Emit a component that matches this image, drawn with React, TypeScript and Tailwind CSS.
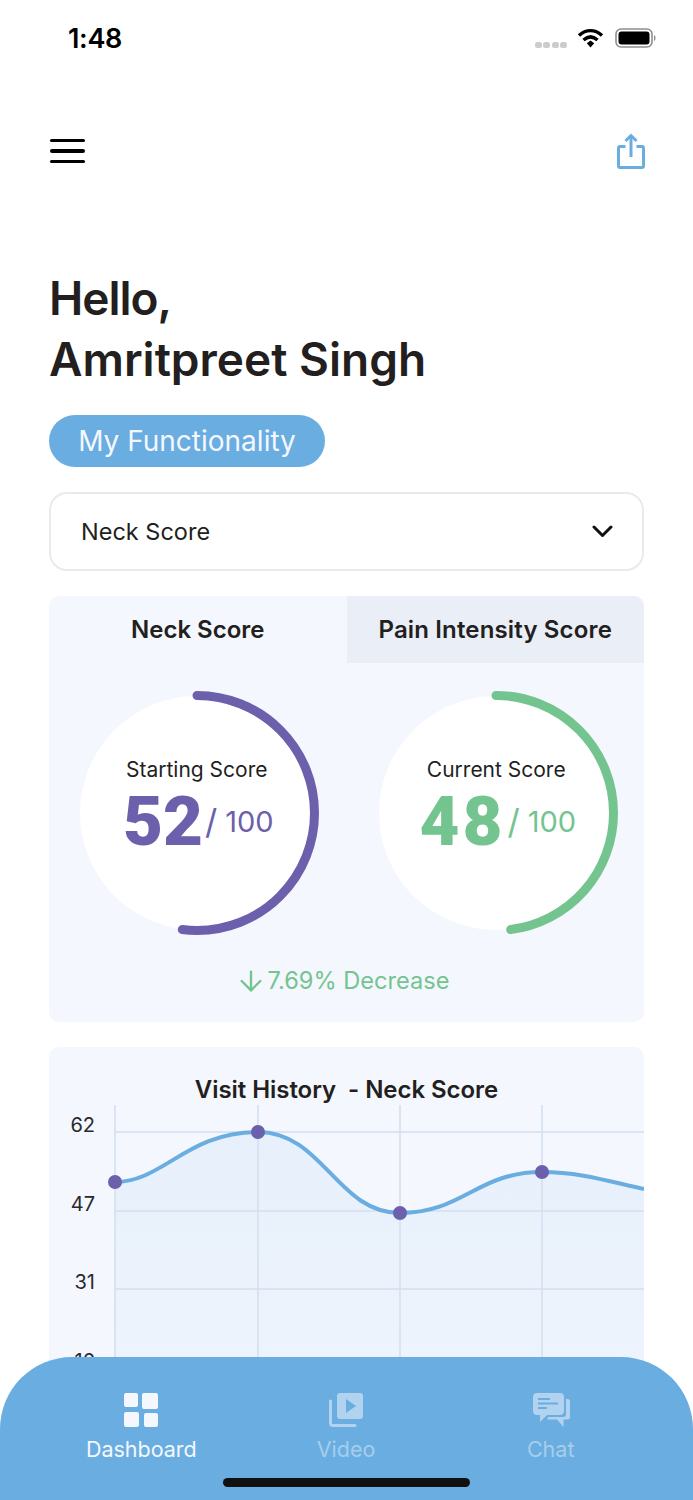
import React from 'react';
import { ArrowDown } from 'lucide-react';

const BLUE = '#6aade0';

const ScoreRing: React.FC<{
  label: string;
  score: number;
  percent: number;
  color: string;
  textClass: string;
  scoreClass?: string;
}> = ({ label, score, percent, color, textClass, scoreClass }) => (
  <div className="relative flex h-[244px] w-[244px] flex-col items-center">
    <svg className="absolute inset-0" width="244" height="244" viewBox="0 0 244 244">
      <circle cx="122" cy="122" r="117" fill="#ffffff" />
      <circle
        cx="122"
        cy="122"
        r="117.5"
        fill="none"
        stroke={color}
        strokeWidth="9"
        strokeLinecap="round"
        pathLength={100}
        strokeDasharray={`${percent} 100`}
        transform="rotate(-90 122 122)"
      />
    </svg>
    <div className="relative mt-[65px] text-[21px] leading-[28px] text-[#1f1f24]">{label}</div>
    <div className={`relative mt-[8px] flex items-center pl-[3px] ${textClass}`}>
      <span className={`[font-family:Roboto,sans-serif] text-[69px] leading-[60px] font-black ${scoreClass ?? ''}`}>
        {score}
      </span>
      <span className="ml-[2px] text-[34px] leading-[40px] font-normal">/</span>
      <span className="ml-[8px] text-[29px] leading-[40px] font-normal">100</span>
    </div>
  </div>
);

const NavItem: React.FC<{ label: string; active?: boolean; children: React.ReactNode }> = ({
  label,
  active,
  children,
}) => (
  <div className="flex flex-col items-center">
    {children}
    <span className={`mt-[8px] text-[21.5px] leading-[28px] ${active ? 'text-[#f4f7fe]' : 'text-[#a6cdec]'}`}>
      {label}
    </span>
  </div>
);

const App: React.FC = () => {
  const yLabels = ['62', '47', '31', '16'];
  const gridX = [10, 153, 295, 437];
  const gridY = [27, 106, 184];
  const dots = [
    [10, 77],
    [153, 27],
    [295, 108],
    [437, 67],
  ];
  const curve = 'M10 77 C58 77 82 27 153 27 C218 27 232 108 295 108 C358 108 372 67 437 67 C476 67 506 77 539 84';

  return (
    <div className="relative h-[1500px] w-[693px] overflow-hidden bg-white [font-family:Inter,sans-serif] text-[#1f1f24]">
      {/* status bar */}
      <div className="flex h-[76px] items-center justify-between pr-[36px] pl-[68px]">
        <span className="pt-[2px] text-[27px] leading-[32px] font-semibold tracking-[-0.3px] text-black">1:48</span>
        <div className="flex items-center">
          <div className="mt-[13px] flex gap-[1.5px]">
            <div className="h-[6px] w-[7px] rounded-[2.5px] bg-[#cccccc]" />
            <div className="h-[6px] w-[7px] rounded-[2.5px] bg-[#cccccc]" />
            <div className="h-[6px] w-[7px] rounded-[2.5px] bg-[#cccccc]" />
            <div className="h-[6px] w-[7px] rounded-[2.5px] bg-[#cccccc]" />
          </div>
          <svg className="ml-[10px]" width="27" height="22" viewBox="0 0 27 22" fill="none">
            <path d="M2 8.5 C9 2 18 2 25 8.5" stroke="#000" strokeWidth="3.4" />
            <path d="M6.5 13 C11 9 16 9 20.5 13" stroke="#000" strokeWidth="3.4" />
            <path d="M9.8 16.2 L13.5 13.6 L17.2 16.2 L13.5 20.5 Z" fill="#000" />
          </svg>
          <svg className="ml-[11px]" width="42" height="20" viewBox="0 0 42 20" fill="none">
            <rect x="1" y="1" width="36" height="18" rx="5" stroke="#8e8e8e" strokeWidth="1.6" />
            <rect x="3.5" y="3.5" width="31" height="13" rx="3" fill="#000" />
            <path d="M39 7 C41 7.5 41 12.5 39 13 Z" fill="#8e8e8e" />
          </svg>
        </div>
      </div>

      {/* header */}
      <div className="mt-[57px] flex h-[36px] items-center justify-between pr-[48px] pl-[50px]">
        <div className="flex w-[35px] flex-col gap-[7px]">
          <div className="h-[3.5px] rounded-full bg-black" />
          <div className="h-[3.5px] rounded-full bg-black" />
          <div className="h-[3.5px] rounded-full bg-black" />
        </div>
        <svg width="28" height="36" viewBox="0 0 28 36" fill="none" stroke={BLUE} strokeWidth="3">
          <path d="M8.5 13.5 H3 Q1.5 13.5 1.5 15 V33 Q1.5 34.5 3 34.5 H25 Q26.5 34.5 26.5 33 V15 Q26.5 13.5 25 13.5 H19.5" />
          <path d="M14 24 V3" />
          <path d="M8.5 8 L14 2.5 L19.5 8" />
        </svg>
      </div>

      <div className="px-[49px]">
        <h1 className="mt-[99px] text-[46px] leading-[61px] font-semibold text-[#231f20]">
          <span className="tracking-[-1px]">Hello,</span>
          <br />
          Amritpreet Singh
        </h1>

        <div className="mt-[25px] flex h-[52px] w-[276px] items-center justify-center rounded-full bg-[#6aade0] text-[28px] text-[#f4f7fe]">
          My Functionality
        </div>

        <div className="mt-[25px] flex h-[79px] items-center justify-between rounded-[18px] border-2 border-[#e8eaf0] pr-[29px] pl-[30px]">
          <span className="text-[23.5px] text-[#231f20]">Neck Score</span>
          <svg width="21" height="13" viewBox="0 0 21 13" fill="none" stroke="#111" strokeWidth="3" strokeLinecap="round" strokeLinejoin="round">
            <path d="M2 2 L10.5 10.5 L19 2" />
          </svg>
        </div>

        {/* score card */}
        <div className="mt-[25px] h-[426px] overflow-hidden rounded-[10px] bg-[#f4f7fe]">
          <div className="grid h-[67px] grid-cols-2 text-[24px] font-semibold text-[#231f20]">
            <div className="flex items-center justify-center">Neck Score</div>
            <div className="flex items-center justify-center bg-[#e9eef7] tracking-[0.15px]">Pain Intensity Score</div>
          </div>
          <div className="mt-[28px] grid grid-cols-2">
            <div className="flex justify-center pr-[2px]">
              <ScoreRing label="Starting Score" score={52} percent={52} color="#6c5fab" textClass="text-[#6c5fab]" />
            </div>
            <div className="flex justify-center pl-[2px]">
              <ScoreRing
                label="Current Score"
                score={48}
                percent={48}
                color="#74c490"
                textClass="text-[#74c490]"
                scoreClass="tracking-[3px]"
              />
            </div>
          </div>
          <div className="mt-[29px] flex items-center justify-center pr-[9px] text-[23.6px] leading-[34px] text-[#74c490]">
            <ArrowDown size={32} strokeWidth={1.75} className="-my-1 mr-[1px]" />
            7.69% Decrease
          </div>
        </div>

        {/* visit history */}
        <div className="mt-[25px] h-[340px] overflow-hidden rounded-t-[10px] bg-[#f4f7fe]">
          <div className="pt-[26px] text-center text-[24px] leading-[34px] font-semibold tracking-[-0.05px] text-[#231f20]">
            Visit History&nbsp; - Neck Score
          </div>
          <div className="mt-[-2px] flex">
            <div className="flex w-[56px] flex-col items-end gap-[50.5px] pt-[6px] pr-[10px] text-[20px] leading-[28px] text-[#2a2a2e]">
              {yLabels.map(label => (
                <span key={label}>{label}</span>
              ))}
            </div>
            <svg width="539" height="270" viewBox="0 0 539 270" fill="none">
              <defs>
                <linearGradient id="area" x1="0" y1="0" x2="0" y2="1">
                  <stop offset="0" stopColor="#6aade0" stopOpacity="0.1" />
                  <stop offset="1" stopColor="#6aade0" stopOpacity="0.04" />
                </linearGradient>
              </defs>
              <path d={`${curve} V270 H10 Z`} fill="url(#area)" />
              {gridX.map(x => (
                <line key={x} x1={x} y1="0" x2={x} y2="270" stroke="#d3deee" strokeWidth="1.5" />
              ))}
              {gridY.map(y => (
                <line key={y} x1="10" y1={y} x2="539" y2={y} stroke="#d3deee" strokeWidth="1.5" />
              ))}
              <path d={curve} stroke="#6aade0" strokeWidth="4" />
              {dots.map(([x, y]) => (
                <circle key={x} cx={x} cy={y} r="7" fill="#6c5fab" />
              ))}
            </svg>
          </div>
        </div>
      </div>

      {/* bottom nav */}
      <div className="absolute right-0 bottom-0 left-0 h-[143px] rounded-t-[72px] bg-[#6aade0]">
        <div className="grid grid-cols-3 pt-[36px] pr-[40px] pl-[39px]">
          <NavItem label="Dashboard" active>
            <svg width="36" height="34" viewBox="0 0 36 34" fill="#f4f7fe">
              <rect x="1" y="0" width="14" height="14" rx="2" />
              <rect x="19" y="0" width="16" height="16" rx="2" />
              <rect x="1" y="19" width="15" height="15" rx="2" />
              <rect x="21" y="20" width="14" height="14" rx="2" />
            </svg>
          </NavItem>
          <NavItem label="Video">
            <svg width="36" height="34" viewBox="0 0 36 34">
              <rect x="9" y="0" width="26" height="26" rx="3" fill="#b2d3ef" />
              <path d="M18 6 L28 13 L18 20 Z" fill="#6aade0" />
              <path d="M2.5 8 V30 Q2.5 32.5 5 32.5 H27" fill="none" stroke="#b2d3ef" strokeWidth="3" strokeLinecap="round" />
            </svg>
          </NavItem>
          <NavItem label="Chat">
            <svg className="ml-[2px]" width="38" height="34" viewBox="0 0 38 34">
              <path d="M33 6 H34.5 Q37 6 37 8.5 V24 Q37 26.5 34.5 26.5 H30.5 V34 L24 26.5 H14 L15 24 H30 Q33 24 33 21 Z" fill="#b2d3ef" />
              <path d="M4 0 H27 Q31 0 31 4 V18 Q31 22 27 22 H14 L7 29 V22 H4 Q0 22 0 18 V4 Q0 0 4 0 Z" fill="#b2d3ef" />
              <path d="M5 6 H17 M5 10.5 H25 M5 15 H14" stroke="#6aade0" strokeWidth="2" />
            </svg>
          </NavItem>
        </div>
        <div className="absolute bottom-[13px] left-[223px] h-[9px] w-[247px] rounded-full bg-[#111111]" />
      </div>
    </div>
  );
};

export default App;
